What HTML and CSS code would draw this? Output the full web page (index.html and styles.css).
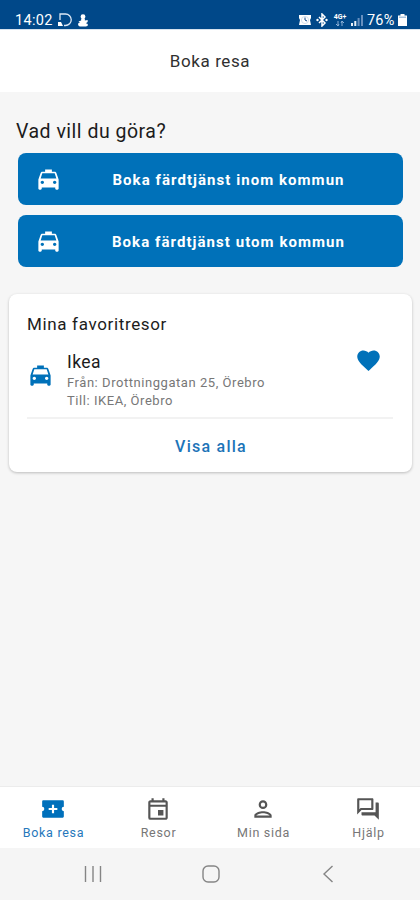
FILE: index.html
```
<!DOCTYPE html>
<html lang="sv">
<head>
<meta charset="utf-8">
<title>Boka resa</title>
<link rel="stylesheet" href="styles.css">
</head>
<body>
<svg class="defs" aria-hidden="true">
  <symbol id="taxi" viewBox="0 0 24 24"><path d="M18.92 6.01C18.72 5.42 18.16 5 17.5 5H15V3H9v2H6.5c-.66 0-1.21.42-1.42 1.01L3 12v8c0 .55.45 1 1 1h1c.55 0 1-.45 1-1v-1h12v1c0 .55.45 1 1 1h1c.55 0 1-.45 1-1v-8l-2.08-5.99zM6.5 16c-.83 0-1.5-.67-1.5-1.5S5.67 13 6.5 13s1.5.67 1.5 1.5S7.33 16 6.5 16zm11 0c-.83 0-1.5-.67-1.5-1.5s.67-1.5 1.5-1.5 1.5.67 1.5 1.5-.67 1.5-1.5 1.5zM5 11l1.500-4.500h11L19 11H5z"/></symbol>
</svg>
<div class="phone">
  <div class="status">
    <div class="status-left">
      <span class="time">14:02</span>
      <svg class="sticker" viewBox="0 0 14 14"><path d="M2 7V1h5.500a5.500 5.500 0 0 1 0 11.500H6" fill="none" stroke="#dce8f5" stroke-width="1.300"/><path d="M0 9h3l2 4H0z" fill="#fff"/></svg>
      <svg class="figure" viewBox="0 0 12 14"><circle cx="6" cy="3" r="2.600"/><path d="M4 5h4v2l3-.5v2L9 10c3 0 3 3.500 0 3.500H3C0 13.500 0 9 3 9L1 8l3-1z"/></svg>
    </div>
    <div class="status-right">
      <svg class="alarm" viewBox="0 0 12 12"><path d="M0 1h12v3l-1 2 1 5H0l1-5-1-2z" fill="#fff"/><circle cx="6" cy="6" r="3.600" fill="#fff" stroke="#b4cae2" stroke-width=".6"/><path d="M6 3.500V6l2 1" fill="none" stroke="#124b8b"/></svg>
      <svg class="bluetooth" viewBox="0 0 12 14"><path d="m3 4 6 6-3 3V1l3 3-6 6" fill="none" stroke="#fff" stroke-width="1.500"/><circle cx="1.500" cy="7" r="1.200" fill="#fff"/><circle cx="10.500" cy="7" r="1.200" fill="#fff"/></svg>
      <span class="network"><span>4G+</span><svg viewBox="0 0 8 5"><path d="M2 5V0m0 5L0 3m2 2 1-2m3 2V0m0 0L5 2m1-2 2 2" fill="none" stroke="#8eb1d6"/></svg></span>
      <svg class="signal" viewBox="0 0 12 11"><path d="M0 8h2v3H0zM3.300 6h2v5h-2z" fill="#e8f0f8"/><path d="M6.600 3h2v8h-2zM10 0h2v11h-2z" fill="#668fbe"/></svg>
      <span class="battery-text">76%</span>
      <svg class="battery" viewBox="0 0 9 12"><path d="M2.500 0h4v1.500H9V12H0V1.500h2.500z" fill="#fff"/><path d="M1 2.500h7V4H1z" fill="#a9c4df"/></svg>
    </div>
  </div>
  <header class="appbar"><h1>Boka resa</h1></header>
  <main>
    <h2>Vad vill du göra?</h2>
    <div class="actions">
      <button class="action"><svg class="icon"><use href="#taxi"/></svg><span>Boka färdtjänst inom kommun</span></button>
      <button class="action"><svg class="icon"><use href="#taxi"/></svg><span>Boka färdtjänst utom kommun</span></button>
    </div>
    <section class="card">
      <h3>Mina favoritresor</h3>
      <div class="trip">
        <svg class="icon"><use href="#taxi"/></svg>
        <div class="trip-text">
          <strong>Ikea</strong>
          <span>Från: Drottninggatan 25, Örebro</span>
          <span>Till: IKEA, Örebro</span>
        </div>
        <svg class="icon heart" viewBox="0 0 24 24"><path d="m12 21.350-1.450-1.320C5.400 15.360 2 12.280 2 8.500 2 5.420 4.420 3 7.500 3c1.740 0 3.410.81 4.500 2.090C13.090 3.810 14.760 3 16.500 3 19.580 3 22 5.420 22 8.500c0 3.780-3.400 6.860-8.550 11.540L12 21.350z"/></svg>
      </div>
      <a class="all">Visa alla</a>
    </section>
  </main>
  <nav class="tabs">
    <a class="tab active"><svg class="icon" viewBox="0 0 24 24"><path fill-rule="evenodd" d="M22 10V5a1 1 0 0 0-1-1H3a1 1 0 0 0-1 1v5a2 2 0 0 1 0 4v5a1 1 0 0 0 1 1h18a1 1 0 0 0 1-1v-5a2 2 0 0 1 0-4zM11 8h2v3h3v2h-3v3h-2v-3H8v-2h3z"/></svg><span>Boka resa</span></a>
    <a class="tab"><svg class="icon" viewBox="0 0 24 24"><path d="M19 4h-1V2h-2v2H8V2H6v2H5c-1.110 0-1.990.9-1.990 2L3 20a2 2 0 0 0 2 2h14c1.100 0 2-.9 2-2V6c0-1.100-.9-2-2-2zm0 16H5V10h14v10zm0-12H5V6h14v2zm-7 5h5v5h-5z"/></svg><span>Resor</span></a>
    <a class="tab"><svg class="icon" viewBox="0 0 24 24"><path d="M12 6a2 2 0 1 1 0 4 2 2 0 0 1 0-4m0 10c2.700 0 5.800 1.290 6 2H6c.23-.72 3.310-2 6-2m0-12a4 4 0 1 0 0 8 4 4 0 0 0 0-8zm0 10c-2.670 0-8 1.340-8 4v2h16v-2c0-2.660-5.330-4-8-4z"/></svg><span>Min sida</span></a>
    <a class="tab"><svg class="icon" viewBox="0 0 24 24"><path d="M15 4v7H5.170L4 12.170V4h11m1-2H3c-.55 0-1 .45-1 1v14l4-4h10c.55 0 1-.45 1-1V3c0-.55-.45-1-1-1zm5 4h-2v9H6v2c0 .55.45 1 1 1h11l4 4V7c0-.55-.45-1-1-1z"/></svg><span>Hjälp</span></a>
  </nav>
  <div class="system">
    <svg viewBox="0 0 18 18"><path d="M1.500 1v16M9 1v16M16.500 1v16"/></svg>
    <svg viewBox="0 0 18 18"><rect x="1" y="1" width="16" height="16" rx="5"/></svg>
    <svg viewBox="0 0 18 18"><path d="M13.500 1 5 9l8.500 8"/></svg>
  </div>
</div>
</body>
</html>
```
FILE: styles.css
```
* { box-sizing: border-box; }
body { margin: 0; font-family: Roboto, sans-serif; color: #1c1c1c; }
h1, h2, h3 { margin: 0; font-weight: 400; }
svg { display: block; flex: none; }
.defs { display: none; }
.icon { width: 27px; height: 27px; fill: currentColor; }
.phone { width: 420px; height: 900px; display: flex; flex-direction: column; background: #f6f6f6; overflow: hidden; }

.status { height: 29px; padding: 10px 13px 0 15px; display: flex; justify-content: space-between; background: #004889; color: #fff; }
.status-left, .status-right { display: flex; align-items: center; height: 20px; }
.time { width: 43px; font-size: 14.500px; letter-spacing: .3px; }
.sticker { width: 14px; height: 14px; }
.figure { width: 12px; height: 13px; margin-left: 5px; fill: #fff; }
.alarm { width: 12px; height: 12px; margin-right: 5px; }
.bluetooth { width: 12px; height: 14px; margin-right: 5px; }
.network { width: 14px; margin-right: 4px; display: flex; flex-direction: column; align-items: center; font-size: 7px; line-height: 7px; font-weight: 700; }
.network svg { width: 8px; height: 5px; }
.signal { width: 12px; height: 11px; margin-right: 4px; }
.battery-text { width: 29px; font-size: 14.500px; letter-spacing: .2px; white-space: nowrap; }
.battery { width: 9px; height: 12px; margin-left: 2px; }

.appbar { height: 63px; display: flex; align-items: center; justify-content: center; background: #fff; border-top: 1px solid #d5e2ee; }
.appbar h1 { font-size: 17px; letter-spacing: .6px; color: #303030; }

main { flex: 1; padding: 27px 8px 0 9px; }
h2 { padding-left: 7px; font-size: 19.500px; line-height: 25px; letter-spacing: .5px; }
.actions { display: flex; flex-direction: column; gap: 10px; padding: 9px 9px 0; }
.action { height: 52px; padding: 0 0 0 17px; display: flex; align-items: center; border: 0; border-radius: 8px; background: #0071b9; color: #fff; font: 700 15px Roboto, sans-serif; letter-spacing: 1.050px; }
.action span { flex: 1; padding-right: 8px; padding-top: 1px; text-align: center; white-space: nowrap; }

.card { height: 178px; margin-top: 27px; padding: 19px 19px 0 18px; border-radius: 8px; background: #fff; box-shadow: 0 1px 3px rgba(0,0,0,.24); }
.card h3 { font-size: 17px; line-height: 23px; letter-spacing: .65px; }
.trip { height: 83px; display: flex; align-items: flex-start; border-bottom: 2px solid #f2f2f2; color: #0071b9; }
.trip > .icon { margin-top: 26px; }
.trip .heart { margin: 11px 11px 0 auto; }
.trip-text { display: flex; flex-direction: column; padding: 14px 0 0 13px; font-size: 13px; line-height: 18px; letter-spacing: .55px; color: #777; }
.trip-text strong { font-size: 17.500px; line-height: 24px; font-weight: 400; letter-spacing: .4px; color: #1c1c1c; }
.all { display: block; padding: 17px 0 0 2px; font-size: 16px; line-height: 22px; font-weight: 500; letter-spacing: 1.250px; text-align: center; color: #1c74b8; }

.tabs { height: 62px; display: grid; grid-template-columns: repeat(4, 105px); background: #fff; border-top: 1px solid #ececec; }
.tab { display: flex; flex-direction: column; align-items: center; padding-top: 9px; font-size: 12.500px; letter-spacing: .7px; line-height: 18px; color: #777; }
.tab span { padding-left: 2px; }
.tab .icon { fill: #555; width: 26px; height: 26px; margin-bottom: 2px; }
.tab.active { color: #2677bb; }
.tab.active .icon { fill: #0070bb; }

.system { height: 52px; padding: 0 83px 0 84px; display: flex; align-items: center; justify-content: space-between; background: #f5f5f5; }
.system svg { width: 18px; height: 18px; fill: none; stroke: #858585; stroke-width: 1.400; }
```
